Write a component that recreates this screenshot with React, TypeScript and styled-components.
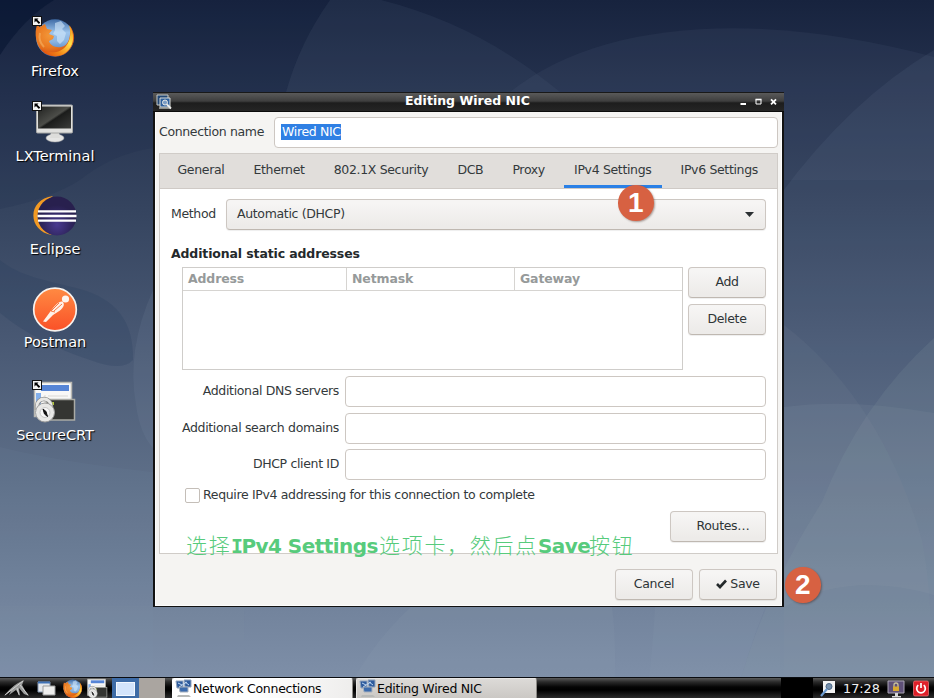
import React from "react";
import styled, { createGlobalStyle } from "styled-components";

const GlobalStyle = createGlobalStyle`
  * { box-sizing: border-box; }
  html, body { margin: 0; padding: 0; overflow: hidden; }
  body {
    font-family: "DejaVu Sans", sans-serif;
    font-size: 12.5px;
    letter-spacing: -0.34px;
    color: #33393b;
  }
`;

const Desktop = styled.div`
  position: relative;
  width: 934px;
  height: 698px;
  overflow: hidden;
  display: flex;
  flex-direction: column;
`;

const WallpaperSvg = styled.svg`
  position: absolute;
  inset: 0;
`;

const IconColumn = styled.div`
  position: relative;
  flex: 1;
  width: 110px;
  padding-top: 13px;
  display: flex;
  flex-direction: column;
  align-items: center;
  gap: 27px;
`;

const Launcher = styled.div<{ $tight?: boolean }>`
  display: flex;
  flex-direction: column;
  align-items: center;
  margin-bottom: ${(p) => (p.$tight ? "-8px" : "0")};
  svg { display: block; }
`;

const LauncherLabel = styled.span`
  height: 18px;
  line-height: 21px;
  font-size: 14.5px;
  letter-spacing: -0.02px;
  color: #fff;
  white-space: nowrap;
  text-shadow: 1px 1px 1px #000;
`;

const Window = styled.section`
  position: absolute;
  left: 153px;
  top: 92px;
  width: 631px;
  height: 515px;
  border: 2px solid #121212;
  border-top: 0;
  background: #f5f4f2;
  display: flex;
  flex-direction: column;
`;

const TitleBar = styled.header`
  height: 20px;
  margin: 0 -2px;
  padding: 0 5px 0 3px;
  display: grid;
  grid-template-columns: 60px 1fr 60px;
  align-items: center;
  border-top: 1px solid #191919;
  border-bottom: 1px solid #0b0b0b;
  background: linear-gradient(#5a5a5a 0%, #3e3e3e 45%, #1d1d1d 55%, #252525 100%);
  svg { display: block; }
`;

const TitleText = styled.h1`
  margin: 0;
  text-align: center;
  color: #fff;
  font-size: 12.5px;
  letter-spacing: 0.02px;
  line-height: 16px;
  font-weight: bold;
  padding-bottom: 2px;
`;

const WindowControls = styled.div`
  display: flex;
  justify-content: flex-end;
`;

const WindowBody = styled.div`
  flex: 1;
  padding: 5px 3px 5px 3px;
  display: flex;
  flex-direction: column;
  border: 1px solid #fdfdfd;
  border-top: 0;
`;

const NameRow = styled.div`
  display: flex;
  align-items: center;
  height: 31px;
`;

const NameLabel = styled.label`
  width: 115px;
  padding-bottom: 2px;
  white-space: nowrap;
`;

const Entry = styled.div`
  flex: 1;
  height: 31px;
  padding: 0 6px 1px;
  display: flex;
  align-items: center;
  border: 1px solid #cdc7c2;
  border-radius: 4px;
  background: #fff;
`;

const Selection = styled.span`
  background: #2f80e4;
  color: #fff;
  height: 16px;
  line-height: 16px;
  padding: 0 0 0 1px;
`;

const Notebook = styled.div`
  margin-top: 5px;
  height: 401px;
  border: 1px solid #d0ccc8;
  background: #fff;
  display: flex;
  flex-direction: column;
`;

const TabBar = styled.nav`
  height: 35px;
  padding-left: 7px;
  display: flex;
  gap: 8.1px;
  background: #e1dedb;
  border-bottom: 1px solid #cfcac6;
`;

const Tab = styled.div<{ $active?: boolean }>`
  height: 34px;
  padding: 0 10.5px 4px;
  line-height: 32px;
  white-space: nowrap;
  border-bottom: 3px solid ${(p) => (p.$active ? "#2a80e6" : "transparent")};
`;

const Page = styled.div`
  flex: 1;
  padding: 10px 11px 11px 11px;
  display: flex;
  flex-direction: column;
`;

const MethodRow = styled.div`
  display: flex;
  align-items: center;
  height: 31px;
`;

const MethodLabel = styled.label`
  width: 55px;
  padding-bottom: 2px;
`;

const raised = `
  border: 1px solid #cdc7c2;
  border-bottom-color: #bfb8b1;
  border-radius: 4px;
  background: linear-gradient(#f6f5f4 10%, #edebe9 90%);
  box-shadow: 0 1px 1px rgba(0, 0, 0, 0.07);
`;

const Combo = styled.div`
  ${raised}
  flex: 1;
  height: 31px;
  padding: 0 11px 2px 10px;
  display: flex;
  align-items: center;
  justify-content: space-between;
  svg { position: relative; top: 1px; }
`;

const Button = styled.button<{ $width: number; $padLeft?: number }>`
  ${raised}
  width: ${(p) => p.$width}px;
  height: 31px;
  padding: 0 0 2px ${(p) => p.$padLeft ?? 0}px;
  display: flex;
  align-items: center;
  justify-content: center;
  gap: 3px;
  font: inherit;
  letter-spacing: inherit;
  color: #2e3436;
`;

const SectionTitle = styled.h2`
  margin: 16px 0 6px;
  height: 15px;
  font-size: 12.5px;
  letter-spacing: -0.13px;
  line-height: 15px;
  color: #24292b;
`;

const AddressArea = styled.div`
  display: flex;
  align-items: flex-start;
  gap: 5px;
  padding-left: 11px;
`;

const AddressTable = styled.div`
  flex: 1;
  height: 103px;
  border: 1px solid #cfcdca;
`;

const TableHead = styled.div`
  display: grid;
  grid-template-columns: 163px 168px 1fr;
  height: 23px;
  border-bottom: 1px solid #d6d4d1;
`;

const HeadCell = styled.div`
  padding-left: 5px;
  line-height: 22px;
  font-weight: bold;
  letter-spacing: -0.14px;
  color: #969a9a;
  & + & { border-left: 1px solid #d6d4d1; }
`;

const ButtonStack = styled.div`
  display: flex;
  flex-direction: column;
  gap: 6px;
`;

const FieldGrid = styled.div`
  margin-top: 6px;
  display: grid;
  grid-template-columns: 168px 1fr;
  column-gap: 6px;
  row-gap: 5.5px;
  align-items: center;
`;

const FieldLabel = styled.label`
  text-align: right;
  padding-bottom: 2px;
  white-space: nowrap;
`;

const CheckRow = styled.div`
  display: flex;
  align-items: center;
  gap: 3px;
  height: 16px;
  margin: 7px 0 0 14px;
`;

const CheckBox = styled.span`
  width: 15px;
  height: 15px;
  border: 1px solid #c4beb8;
  border-radius: 2px;
  background: #fff;
`;

const CheckLabel = styled.span`
  padding-bottom: 1px;
`;

const RoutesRow = styled.div`
  display: flex;
  justify-content: flex-end;
  margin-top: 8px;
`;

const ActionRow = styled.div`
  display: flex;
  justify-content: flex-end;
  gap: 6px;
  margin: 15px 1px 0 0;
`;

const StepBadge = styled.div<{ $x: number; $y: number }>`
  position: absolute;
  left: ${(p) => p.$x}px;
  top: ${(p) => p.$y}px;
  width: 35.5px;
  height: 35.5px;
  border-radius: 50%;
  background: #d76142;
  box-shadow: 1px 1px 2px rgba(60, 30, 20, 0.4);
  color: #fff;
  font: bold 28px/36px "Liberation Sans", sans-serif;
  letter-spacing: 0;
  text-align: center;
`;

const Annotation = styled.div`
  position: absolute;
  left: 186px;
  top: 530px;
  display: flex;
  align-items: baseline;
  line-height: 28px;
  color: #57cb7c;
  white-space: nowrap;
`;

const Han = styled.span<{ $width: number }>`
  width: ${(p) => p.$width}px;
  font-family: "Noto Sans CJK SC", sans-serif;
  font-weight: 300;
  font-size: 21px;
  letter-spacing: 1.7px;
`;

const Latin = styled.span<{ $width: number }>`
  width: ${(p) => p.$width}px;
  font-weight: bold;
  font-size: 20px;
  letter-spacing: -0.55px;
`;

const SlabI = styled.span`
  font-family: "DejaVu Sans Mono", monospace;
  margin-right: -1px;
`;

const Panel = styled.footer`
  position: relative;
  height: 21px;
  display: flex;
  align-items: stretch;
  border-top: 1px solid #0a0c10;
  background: linear-gradient(#5a5a5a 0%, #2a2a2a 20%, #050505 45%, #000 60%, #2b2b2b 100%);
  svg { display: block; }
`;

const QuickLaunch = styled.div`
  width: 112px;
  display: flex;
`;

const Pager = styled.div`
  width: 60px;
  display: flex;
`;

const Workspace = styled.div<{ $active?: boolean }>`
  width: ${(p) => (p.$active ? 27 : 26)}px;
  background: ${(p) => (p.$active ? "#3d6ba6" : "#aaa5a0")};
  padding: 4px 4px 1px;
`;

const WorkspaceWindow = styled.div`
  height: 14px;
  border: 1px solid #f3f8ff;
  background: #d3e4fb;
`;

const Task = styled.div<{ $raised?: boolean }>`
  width: 181px;
  margin-right: 3px;
  padding-left: 2px;
  display: flex;
  align-items: center;
  gap: 1px;
  border: 1px solid ${(p) => (p.$raised ? "#fff" : "#e8e6e4")};
  border-right-color: #8b8985;
  border-bottom: 0;
  border-radius: 2px 2px 0 0;
  background: ${(p) => (p.$raised ? "linear-gradient(100deg, #fff 45%, #eeedec)" : "linear-gradient(#dcdad7, #cbc8c4)")};
  color: #050505;
  letter-spacing: -0.27px;
  white-space: nowrap;
`;

const Tray = styled.div`
  margin-left: auto;
  width: 153px;
  display: flex;
  align-items: center;
`;

const CpuMeter = styled.div`
  width: 32px;
  align-self: stretch;
  background: #000;
  margin-right: 7px;
`;

const Clock = styled.time`
  width: 44px;
  padding-left: 7px;
  color: #f0f0f0;
  font-size: 12.8px;
  letter-spacing: 0;
`;

const TrayGap = styled.span<{ $w: number }>`
  width: ${(p) => p.$w}px;
`;

const Wallpaper = () => (
  <WallpaperSvg width="934" height="698" viewBox="0 0 934 698">
    <defs>
      <linearGradient id="sky" x1="0" y1="0" x2="0" y2="1">
        <stop offset="0" stopColor="#17233e" />
        <stop offset="0.13" stopColor="#25324e" />
        <stop offset="0.3" stopColor="#35445f" />
        <stop offset="0.5" stopColor="#4a5a75" />
        <stop offset="0.7" stopColor="#5f7089" />
        <stop offset="1" stopColor="#8192ab" />
      </linearGradient>
    </defs>
    <rect width="934" height="698" fill="url(#sky)" />
    <path d="M0 0H54Q24 18 0 55Z" fill="#04122f" opacity=".55" />
    <path d="M330 0Q300 42 286 92H560Q480 25 381 0Z" fill="#4a5873" opacity=".18" />
    <path d="M510 92C600 20 760 10 934 57V180H510Z" fill="#566580" opacity=".14" />
    <path d="M934 50Q850 100 780 195V698H934Z" fill="#7486a0" opacity=".11" />
    <path d="M0 209Q50 199 80 180Q112 154 153 148L286 92Q300 42 330 0H54Q24 18 0 55Z" fill="#14223f" opacity=".12" />
    <path d="M0 260C20 277 50 281 80 289C115 299 134 320 133 360Q122 372 90 360Q35 342 0 313Z" fill="#263c5c" opacity=".22" />
    <path d="M153 290Q126 350 136 405Q140 434 153 448Z" fill="#8392aa" opacity=".13" />
    <path d="M0 447Q60 462 153 472V698H0Z" fill="#8595af" opacity=".08" />
    <path d="M0 606H244Q244 655 249 698H0Z" fill="#8999b0" opacity=".06" />
    <path d="M345 698Q365 650 411 607H612Q617 645 614 698Z" fill="#96a5b9" opacity=".12" />
    <path d="M655 607Q652 655 647 698H735Q760 610 784 567V607Z" fill="#8fa0b7" opacity=".11" />
    <path d="M784 325Q881 400 922 540Q936 610 928 698H784Z" fill="#8b9ca8" opacity=".09" />
    <path d="M934 338Q860 405 822 502Q765 590 735 698H934Z" fill="#8ba0a6" opacity=".15" />
    <path d="M784 407Q850 398 934 413V595Q850 570 784 607Z" fill="#a2acb9" opacity=".09" />
  </WallpaperSvg>
);

const Emblem = () => (
  <g>
    <rect x="1.5" y="3.5" width="9" height="9" fill="#f4f4f4" stroke="#111" />
    <path d="M3.5 5.5h4l-1.2 1.2 2.9 2.9-1.3 1.3-2.9-2.9-1.5 1.5z" fill="#000" />
  </g>
);

const FirefoxArt = ({ uid }: { uid: string }) => (
  <g>
    <defs>
      <radialGradient id={uid + "a"} cx=".38" cy=".35" r=".75">
        <stop offset="0" stopColor="#f3983a" />
        <stop offset=".5" stopColor="#e97820" />
        <stop offset=".85" stopColor="#d14e10" />
        <stop offset="1" stopColor="#a92c0b" />
      </radialGradient>
      <linearGradient id={uid + "b"} x1="0" y1="0" x2="0" y2="1">
        <stop offset="0" stopColor="#3f6ba5" />
        <stop offset=".35" stopColor="#9cc4ec" />
        <stop offset=".6" stopColor="#8ab4e0" />
        <stop offset="1" stopColor="#3767ad" />
      </linearGradient>
      <linearGradient id={uid + "c"} x1="1" y1="0" x2="0" y2="1">
        <stop offset="0" stopColor="#f28c15" />
        <stop offset=".35" stopColor="#ffe04a" />
        <stop offset=".65" stopColor="#f38a19" />
        <stop offset="1" stopColor="#d93a0a" />
      </linearGradient>
    </defs>
    <circle cx="24" cy="25" r="18.7" fill={`url(#${uid}b)`} />
    <path d="M6 12C3 20 5 32 11 38C19 46 33 45 39 36C44 30 45 21 39 13C40 23 38 33 30 34C24 35 19 32 18 28L22 26L23 23L18 21L21 17L16 16L14 11L9 14Z" fill={`url(#${uid}a)`} />
    <path d="M38 12C46 23 42 37 31 42C23 45 14 42 9 35C17 41 29 41 35 33C40 27 40 19 38 12Z" fill={`url(#${uid}c)`} />
    <path d="M24 10l6-2 4 5-3 3 4 4-2 7-4 4-3-3v-5l-4-2 2-4z" fill="#d2e8fa" opacity=".6" />
    <path d="M9 20q-2 8 4 14" fill="none" stroke="#f7b466" strokeWidth="2" opacity=".6" />
  </g>
);

const SecureArt = () => (
  <g>
    <rect x="3.5" y="5.5" width="37" height="34" fill="#f8f8f7" stroke="#b9b8b2" strokeWidth="1.5" />
    <rect x="10" y="8" width="28" height="6" fill="#5685d6" />
    <path d="M5 16h5v21H5z" fill="#82afeb" />
    <path d="M14 18v17M17 19h20" stroke="#dad9d5" />
    <path d="M14 22h1M14 27h1" stroke="#444" />
    <rect x="15.5" y="22.5" width="28" height="20.5" fill="#343532" stroke="#a9aaa5" strokeWidth="1.5" />
    <path d="M22 25v3" stroke="#b2c83c" strokeWidth="2" />
    <path d="M6 33v-4a7 7 0 0 1 14 0v4" fill="none" stroke="#8b8c8b" strokeWidth="4.5" />
    <path d="M6 33v-4a7 7 0 0 1 14 0v4" fill="none" stroke="#e8e8e6" strokeWidth="2.8" />
    <circle cx="14" cy="35.5" r="9.5" fill="#e8e8e6" stroke="#9c9c9b" />
    <circle cx="14" cy="35.5" r="5" fill="#f8f8f8" stroke="#c9c9c8" />
    <path d="M12 32l3 2.5 1.5 5-3-2.5z" fill="#111" stroke="#111" />
  </g>
);

const launchers = [
  { label: "Firefox", tight: true, art: <><FirefoxArt uid="ff" /><Emblem /></> },
  {
    label: "LXTerminal",
    art: (
      <>
        <defs>
          <linearGradient id="scr" x1="0" y1="0" x2="1" y2="1">
            <stop offset="0" stopColor="#20211f" /><stop offset=".48" stopColor="#4c4d49" />
            <stop offset=".54" stopColor="#1b1c1b" /><stop offset="1" stopColor="#3b3c3a" />
          </linearGradient>
        </defs>
        <ellipse cx="24" cy="40" rx="9" ry="4" fill="#e5e5e4" stroke="#aaa" strokeWidth=".5" />
        <path d="M20 34h8l1 6H19z" fill="#dddddb" />
        <rect x="5.5" y="7" width="36" height="28" rx="1" fill="#e0e0de" stroke="#a7a8a6" />
        <rect x="7" y="8.5" width="33" height="22" fill="url(#scr)" />
        <Emblem />
      </>
    ),
  },
  {
    label: "Eclipse",
    art: (
      <>
        <defs>
          <radialGradient id="ecl" cx=".5" cy=".72" r=".5">
            <stop offset="0" stopColor="#493a90" /><stop offset=".7" stopColor="#30265f" /><stop offset="1" stopColor="#28204e" />
          </radialGradient>
        </defs>
        <path d="M22 5C-4 8-4 40 21 44C9 37 7 16 22 5Z" fill="#f39a23" />
        <circle cx="26" cy="25" r="19.5" fill="url(#ecl)" />
        <path d="M7 20.4h38M6.5 25h39M7 29.6h38" stroke="#fff" strokeWidth="2.3" />
      </>
    ),
  },
  {
    label: "Postman",
    art: (
      <>
        <defs>
          <linearGradient id="pm" x1="0" y1="0" x2="0" y2="1">
            <stop offset="0" stopColor="#ff8a42" /><stop offset="1" stopColor="#fa5128" />
          </linearGradient>
        </defs>
        <circle cx="24" cy="25.5" r="21.3" fill="url(#pm)" stroke="#f7f2ee" strokeWidth="1.7" />
        <circle cx="34.5" cy="15" r="3.6" fill="#fff4ed" />
        <path d="M31.5 17.5C27 17 23 23 19 28L12 37.5 15 38 22 31 29 26.5C33 23 34 20 31.5 17.5Z" fill="#fff1e8" />
        <path d="M28 19l-8 8M31 20l-8 7M20 27l4 1" stroke="#f77a45" strokeWidth="1" />
      </>
    ),
  },
  { label: "SecureCRT", art: <><SecureArt /><Emblem /></> },
];

const NetIcon = () => (
  <svg width="17" height="19" viewBox="0 0 17 19">
    <path d="M1 2h7v7H2zM9 1h7v7h-6z" fill="#2d5b9d" stroke="#91a4bd" />
    <path d="M3 4l4 2M10 3l4 3M4 8l8-5" stroke="#bdd6f1" />
    <path d="M4 8h9v5H5z" fill="#3b6bad" stroke="#a8b2be" />
    <path d="M3 16h11l2 2H2z" fill="#b8bab8" />
  </svg>
);

const tabs = ["General", "Ethernet", "802.1X Security", "DCB", "Proxy", "IPv4 Settings", "IPv6 Settings"];

export default function App() {
  return (
    <Desktop>
      <GlobalStyle />
      <Wallpaper />
      <IconColumn>
        {launchers.map((l) => (
          <Launcher key={l.label} $tight={l.tight}>
            <svg width="48" height="48" viewBox="0 0 48 48">{l.art}</svg>
            <LauncherLabel>{l.label}</LauncherLabel>
          </Launcher>
        ))}
      </IconColumn>

      <Window>
        <TitleBar>
          <svg width="16" height="16" viewBox="0 0 16 16">
            <path d="M1 1h11v10H1z" fill="#214775" stroke="#c9ccc9" />
            <path d="M4 4h10v9H4z" fill="#2e609d" stroke="#d9dbd8" />
            <path d="M3 14h12" stroke="#b2b4b0" strokeWidth="1.5" />
            <circle cx="9" cy="8.5" r="2.5" fill="#7a9cc4" stroke="#e9e9e7" />
            <path d="M11 10.5l4 4" stroke="#eeeeec" strokeWidth="1.8" />
          </svg>
          <TitleText>Editing Wired NIC</TitleText>
          <WindowControls>
            <svg width="39" height="10" viewBox="0 0 39 10">
              <path d="M0.5 7h5.5" stroke="#fff" strokeWidth="2" />
              <path d="M16 2.5h5v4.5h-5z" fill="none" stroke="#fff" />
              <path d="M15.5 2.5h6" stroke="#fff" strokeWidth="1.6" />
              <path d="M31 2.3l5 5M36 2.3l-5 5" stroke="#fff" strokeWidth="1.8" />
            </svg>
          </WindowControls>
        </TitleBar>
        <WindowBody>
          <NameRow>
            <NameLabel>Connection name</NameLabel>
            <Entry><Selection>Wired NIC</Selection></Entry>
          </NameRow>
          <Notebook>
            <TabBar>
              {tabs.map((t) => <Tab key={t} $active={t === "IPv4 Settings"}>{t}</Tab>)}
            </TabBar>
            <Page>
              <MethodRow>
                <MethodLabel>Method</MethodLabel>
                <Combo>
                  Automatic (DHCP)
                  <svg width="9" height="5" viewBox="0 0 9 5"><path d="M0 0h9L4.5 5z" fill="#2b3032" /></svg>
                </Combo>
              </MethodRow>
              <SectionTitle>Additional static addresses</SectionTitle>
              <AddressArea>
                <AddressTable>
                  <TableHead>
                    <HeadCell>Address</HeadCell>
                    <HeadCell>Netmask</HeadCell>
                    <HeadCell>Gateway</HeadCell>
                  </TableHead>
                </AddressTable>
                <ButtonStack>
                  <Button $width={78}>Add</Button>
                  <Button $width={78}>Delete</Button>
                </ButtonStack>
              </AddressArea>
              <FieldGrid>
                <FieldLabel>Additional DNS servers</FieldLabel><Entry />
                <FieldLabel>Additional search domains</FieldLabel><Entry />
                <FieldLabel>DHCP client ID</FieldLabel><Entry />
              </FieldGrid>
              <CheckRow>
                <CheckBox />
                <CheckLabel>Require IPv4 addressing for this connection to complete</CheckLabel>
              </CheckRow>
              <RoutesRow><Button $width={96} $padLeft={10}>Routes…</Button></RoutesRow>
            </Page>
          </Notebook>
          <ActionRow>
            <Button $width={78}>Cancel</Button>
            <Button $width={78}>
              <svg width="11" height="10" viewBox="0 0 11 10"><path d="M1 5l3 3 6-6.5" fill="none" stroke="#24292b" strokeWidth="2.6" /></svg>
              Save
            </Button>
          </ActionRow>
        </WindowBody>
      </Window>

      <StepBadge $x={618} $y={185}>1</StepBadge>
      <StepBadge $x={785} $y={567}>2</StepBadge>
      <Annotation>
        <Han $width={45}>选择</Han>
        <Latin $width={148}><SlabI>I</SlabI>Pv4 Settings</Latin>
        <Han $width={159}>选项卡，然后点</Han>
        <Latin $width={51}>Save</Latin>
        <Han $width={46}>按钮</Han>
      </Annotation>

      <Panel>
        <QuickLaunch>
          <svg width="112" height="20" viewBox="0 0 112 20">
            <path d="M4 18C8 13 14 6 24 2L22 7Q25 13 29 18L24 16 19 10 20 18 16 12 9 17 11 13Z" fill="#9b9c9b" />
            <path d="M5 17L23 3M20 7l8 10M17 10l2 7" stroke="#dededd" strokeWidth=".8" />
            <path d="M38 4h12v10H38z" fill="#e4e7eb" stroke="#8698b1" />
            <path d="M38 4.5h12" stroke="#3e71b5" strokeWidth="2" />
            <path d="M43 8h12v9H43z" fill="#eeeeed" stroke="#9b9c9c" />
            <g transform="translate(61 -1.5) scale(.49)"><FirefoxArt uid="fs" /></g>
            <g transform="translate(86 -1.5) scale(.48)"><SecureArt /></g>
          </svg>
        </QuickLaunch>
        <Pager>
          <Workspace $active><WorkspaceWindow /></Workspace>
          <Workspace />
        </Pager>
        <Task $raised><NetIcon />Network Connections</Task>
        <Task><NetIcon />Editing Wired NIC</Task>
        <Tray>
          <CpuMeter />
          <svg width="16" height="18" viewBox="0 0 16 18">
            <path d="M3 2h12v12H3z" fill="#f2f3f2" />
            <circle cx="9" cy="7.5" r="3" fill="#7691ad" stroke="#4b6684" />
            <path d="M7 10l-6 7" stroke="#6d9dd2" strokeWidth="2.2" />
          </svg>
          <Clock>17:28</Clock>
          <TrayGap $w={7} />
          <svg width="18" height="19" viewBox="0 0 18 19">
            <path d="M1 2h16v12H1z" fill="#5e5077" stroke="#a9a5b3" />
            <path d="M8 14h3v3H8zM5 17h9v1.5H5z" fill="#d6d6d5" />
            <path d="M7 8V6a2 2 0 0 1 4 0v2" fill="none" stroke="#c9c19b" strokeWidth="1.3" />
            <path d="M6 7.5h6V12H6z" fill="#d9a92f" />
          </svg>
          <TrayGap $w={8} />
          <svg width="16" height="18" viewBox="0 0 16 18">
            <rect x=".5" y="2" width="15" height="15" rx="1.5" fill="#df2029" stroke="#f0787b" strokeWidth=".7" />
            <path d="M5.3 6.2a4.3 4.3 0 1 0 5.4 0M8 4v5" fill="none" stroke="#fff" strokeWidth="1.7" />
          </svg>
        </Tray>
      </Panel>
    </Desktop>
  );
}
